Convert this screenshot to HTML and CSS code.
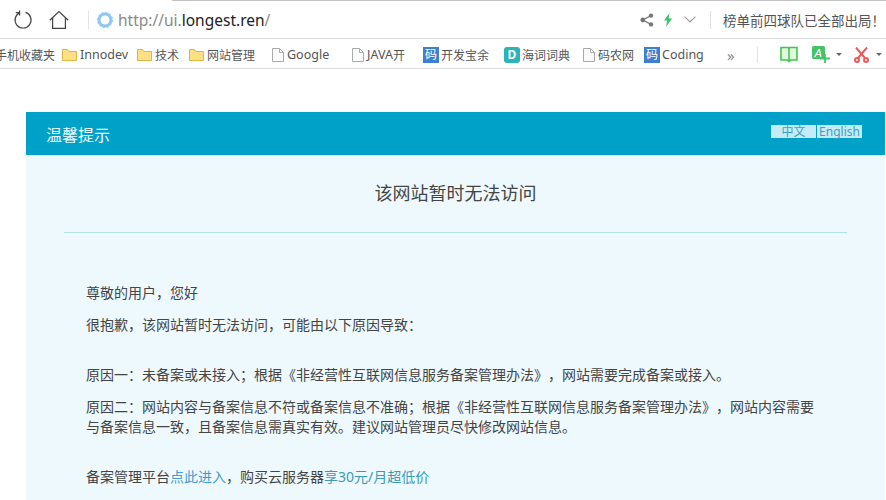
FILE: index.html
```html
<!DOCTYPE html>
<html lang="zh-CN">

<head>
  <meta charset="UTF-8">
  <meta name="viewport" content="width=device-width, initial-scale=1.0">
  <title>该网站暂时无法访问</title>
  <link rel="stylesheet" href="styles.css">
</head>

<body>
  <div class="tab-edge"></div>

  <div class="toolbar">
    <svg class="tool-refresh" width="20" height="20" viewBox="0 0 20 20" fill="none" stroke="#444" stroke-width="1.2">
      <path d="M7 2.6A8 8 0 1 0 12.6 2.4"/>
      <path d="M6.6 0.4V5.6"/>
      <path d="M2.8 2.6H7"/>
    </svg>
    <svg class="tool-home" width="20" height="20" viewBox="0 0 20 20" fill="none" stroke="#444" stroke-width="1.2">
      <path d="M0.8 10.2L10 1.6L19.2 10.2"/>
      <path d="M3.6 8V18.4H16.4V8"/>
    </svg>
    <div class="tool-sep"></div>
    <svg class="tool-ring" width="18" height="18" viewBox="0 0 18 18" fill="none">
      <circle cx="9" cy="9" r="6" stroke="#8cc8f0" stroke-width="3"/>
      <circle cx="9" cy="9" r="7.6" stroke="#8cc8f0" stroke-width="1" stroke-dasharray="2 2"/>
    </svg>
    <div class="url"><span class="url-dim">http://ui.</span>longest.ren<span class="url-dim">/</span></div>
    <svg class="tool-share" width="14" height="14" viewBox="0 0 14 14" fill="#777">
      <circle cx="2.8" cy="7" r="2.4"/>
      <circle cx="11" cy="2.6" r="2.2"/>
      <circle cx="11" cy="11.4" r="2.2"/>
      <path d="M2.8 7L11 2.6M2.8 7L11 11.4" stroke="#777" stroke-width="1.2"/>
    </svg>
    <svg class="tool-bolt" width="10" height="14" viewBox="0 0 10 14" fill="#3fc46a">
      <path d="M6.4 0L1 7.6H4.2L3 14L9.2 5.6H5.8Z"/>
    </svg>
    <svg class="tool-chevron" width="12" height="7" viewBox="0 0 12 7" fill="none" stroke="#999" stroke-width="1.1">
      <path d="M0.6 0.6L6 6L11.4 0.6"/>
    </svg>
    <div class="tool-sep news-sep"></div>
    <div class="news">榜单前四球队已全部出局！</div>
  </div>

  <div class="bookmarks">
    <div class="mark">手机收藏夹</div>
    <div class="mark">
      <svg class="folder" width="15" height="12" viewBox="0 0 15 12"><path d="M0.5 11.5V0.5H5.5L7 2.5H14.5V11.5Z" fill="#ffe084" stroke="#dfb548"/></svg>
      <span class="latin">Innodev</span>
    </div>
    <div class="mark">
      <svg class="folder" width="15" height="12" viewBox="0 0 15 12"><path d="M0.5 11.5V0.5H5.5L7 2.5H14.5V11.5Z" fill="#ffe084" stroke="#dfb548"/></svg>
      技术
    </div>
    <div class="mark">
      <svg class="folder" width="15" height="12" viewBox="0 0 15 12"><path d="M0.5 11.5V0.5H5.5L7 2.5H14.5V11.5Z" fill="#ffe084" stroke="#dfb548"/></svg>
      网站管理
    </div>
    <div class="mark">
      <svg class="page" width="12" height="14" viewBox="0 0 12 14"><path d="M0.5 0.5H7.5L11.5 4.5V13.5H0.5ZM7.5 0.5V4.5H11.5" fill="#fafafa" stroke="#aaa"/></svg>
      <span class="latin">Google</span>
    </div>
    <div class="mark">
      <svg class="page" width="12" height="14" viewBox="0 0 12 14"><path d="M0.5 0.5H7.5L11.5 4.5V13.5H0.5ZM7.5 0.5V4.5H11.5" fill="#fafafa" stroke="#aaa"/></svg>
      <span class="latin">JAVA</span>开
    </div>
    <div class="mark"><span class="badge">码</span>开发宝余</div>
    <div class="mark"><span class="badge badge-d">D</span>海词词典</div>
    <div class="mark">
      <svg class="page" width="12" height="14" viewBox="0 0 12 14"><path d="M0.5 0.5H7.5L11.5 4.5V13.5H0.5ZM7.5 0.5V4.5H11.5" fill="#fafafa" stroke="#aaa"/></svg>
      码农网
    </div>
    <div class="mark"><span class="badge">码</span><span class="latin">Coding</span></div>
    <div class="more">»</div>
    <div class="tool-sep"></div>
    <svg class="ext-book" width="18" height="17" viewBox="0 0 18 17" fill="#e4f7dc" stroke="#3cc850" stroke-width="1.6">
      <path d="M1 1.5H8.2L9 2.5L9.8 1.5H17V14H10.5L9 15.5L7.5 14H1Z"/>
      <path d="M9 2.5V15" fill="none"/>
    </svg>
    <svg class="ext-plus" width="18" height="17" viewBox="0 0 18 17">
      <rect x="0" y="0" width="13" height="13" rx="1.5" fill="#43c46a"/>
      <text x="2.5" y="11" font-size="11" font-style="italic" font-family="Liberation Sans" fill="#fff">A</text>
      <path d="M8 12.5H18M13 8V17" stroke="#43c46a" stroke-width="1.8"/>
    </svg>
    <span class="caret"></span>
    <svg class="ext-cut" width="15" height="16" viewBox="0 0 15 16" fill="none" stroke="#ee5a5a" stroke-width="2">
      <path d="M2 0.5L11 11M13 0.5L4 11"/>
      <circle cx="3" cy="13" r="2"/>
      <circle cx="12" cy="13" r="2"/>
    </svg>
    <span class="caret"></span>
  </div>

  <div class="notice">
    <div class="notice-head">
      <div class="notice-name">温馨提示</div>
      <div class="lang">
        <span class="lang-item">中文</span>
        <span class="lang-item">English</span>
      </div>
    </div>
    <div class="notice-body">
      <h1 class="notice-title">该网站暂时无法访问</h1>
      <div class="notice-text">
        <p class="first">尊敬的用户，您好</p>
        <p class="next">很抱歉，该网站暂时无法访问，可能由以下原因导致：</p>
        <p class="gap">原因一：未备案或未接入；根据《非经营性互联网信息服务备案管理办法》，网站需要完成备案或接入。</p>
        <p class="next">原因二：网站内容与备案信息不符或备案信息不准确；根据《非经营性互联网信息服务备案管理办法》，网站内容需要与备案信息一致，且备案信息需真实有效。建议网站管理员尽快修改网站信息。</p>
        <p class="gap">备案管理平台<a class="link" href="#">点此进入</a>，购买云服务器<a class="link-teal" href="#">享30元/月超低价</a></p>
      </div>
    </div>
  </div>
</body>

</html>
```

FILE: styles.css
```css
body {
  margin: 0;
  height: 500px;
  overflow: hidden;
  background-color: #fff;
  font-family: "Noto Sans", "Noto Sans CJK SC", sans-serif;
  text-spacing-trim: space-all;
  color: #444;
}

.tab-edge {
  height: 1px;
  margin-left: 172px;
  background-color: #c4c4c4;
}

/* barra do navegador */
.toolbar {
  display: flex;
  align-items: center;
  height: 37px;
  border-bottom: 1px solid #ddd;
  overflow: hidden;
}

.tool-refresh {
  margin-left: 13px;
}

.tool-home {
  margin-left: 16px;
}

.tool-sep {
  width: 1px;
  height: 18px;
  background-color: #e2e2e2;
}

.toolbar > .tool-sep {
  margin-left: 19px;
}

.tool-ring {
  margin-left: 7px;
}

.url {
  width: 522px;
  margin-left: 4px;
  font-size: 15.5px;
  color: #222;
  white-space: nowrap;
}

.url-dim {
  color: #8a8a8a;
}

.tool-bolt {
  margin-left: 9px;
}

.tool-chevron {
  margin-left: 11px;
}

.toolbar > .news-sep {
  margin-left: 14px;
}

.news {
  margin-left: 12px;
  font-size: 13.5px;
  white-space: nowrap;
  color: #555;
}

/* favoritos */
.bookmarks {
  display: grid;
  grid-template-columns: 67px 75px 52px 83px 80px 71px 81px 79px 61px 83px 30px 23px 32px 24px 18px 22px 6px;
  align-items: center;
  height: 27px;
  margin-left: -5px;
  padding-top: 2px;
  border-bottom: 1px solid #ddd;
  font-size: 12px;
  color: #555;
}

.mark {
  display: flex;
  align-items: center;
  white-space: nowrap;
}

.latin {
  font-size: 12.5px;
}

.folder {
  margin-right: 3px;
}

.page {
  margin-right: 3px;
}

.badge {
  display: block;
  width: 16px;
  height: 16px;
  margin-right: 2px;
  background-color: #3f7fd0;
  color: #fff;
  font-size: 12px;
  line-height: 16px;
  text-align: center;
}

.badge-d {
  border-radius: 3px;
  background-color: #2bb3b8;
  font-weight: bold;
}

.more {
  font-size: 15px;
  color: #888;
}

.bookmarks .tool-sep {
  height: 16px;
}

.caret {
  width: 0;
  height: 0;
  border-left: 3px solid transparent;
  border-right: 3px solid transparent;
  border-top: 3px solid #666;
}

/* aviso */
.notice {
  margin: 43px 1px 0 26px;
}

.notice-head {
  display: flex;
  justify-content: space-between;
  align-items: center;
  height: 43px;
  padding: 0 23px 0 20px;
  background-color: #00a1c8;
}

.notice-name {
  font-size: 16px;
  color: #e8fbff;
}

.lang {
  display: flex;
  gap: 1px;
  margin-top: -4px;
  font-size: 12px;
  line-height: 13px;
  color: #3f9fc0;
}

.lang-item {
  width: 45px;
  background-color: #c4ecf8;
  text-align: center;
}

.notice-body {
  height: 344px;
  padding: 1px 38px 0;
  background-color: #eef9fe;
}

.notice-title {
  height: 76px;
  margin: 0;
  border-bottom: 1px solid #b5e2ea;
  font-size: 18px;
  font-weight: normal;
  line-height: 74px;
  text-align: center;
  color: #444;
}

.notice-text {
  width: 740px;
  padding: 50px 0 0 22px;
  font-size: 14px;
  line-height: 20px;
  color: #444;
}

.notice-text p {
  margin: 0;
}

.notice-text .next {
  margin-top: 12px;
}

.notice-text .gap {
  margin-top: 30px;
}

.link {
  color: #3f9bd0;
  text-decoration: none;
}

.link-teal {
  color: #3a9ab8;
  text-decoration: none;
}
```
